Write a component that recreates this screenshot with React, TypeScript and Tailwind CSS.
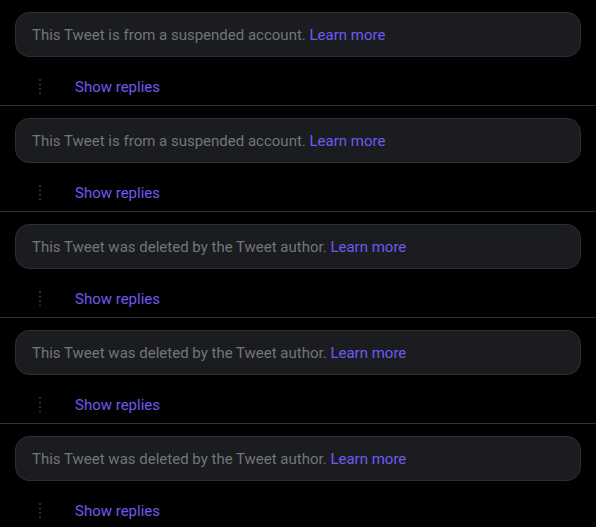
const items = [
  "This Tweet is from a suspended account.",
  "This Tweet is from a suspended account.",
  "This Tweet was deleted by the Tweet author.",
  "This Tweet was deleted by the Tweet author.",
  "This Tweet was deleted by the Tweet author.",
];

function Dots() {
  return (
    <svg width="4" height="18" viewBox="0 0 4 18" className="ml-[23px]">
      {[1, 5.5, 10, 14.5].map((y) => (
        <circle key={y} cx="2" cy={y + 1} r="1" fill="#3a3d42" />
      ))}
    </svg>
  );
}

export default function App() {
  return (
    <div className="min-h-[527px] bg-black font-['Roboto',sans-serif]">
      {items.map((text, i) => (
        <div key={i} className="border-b border-[#2f3336] px-[15px] pt-[12px]">
          <div className="flex h-[45px] items-center rounded-[14px] border border-[#2b2e33] bg-[#1a1c20] px-4 pt-[1px] text-[15px] text-[#71767b]">
            <span>
              {text}{" "}
              <a href="#" className="text-[#6e5af0]">
                Learn more
              </a>
            </span>
          </div>
          <div className="flex h-[48px] items-center pt-[12px]">
            <Dots />
            <a href="#" className="ml-[33px] text-[15px] text-[#6e5af0]">
              Show replies
            </a>
          </div>
        </div>
      ))}
    </div>
  );
}
